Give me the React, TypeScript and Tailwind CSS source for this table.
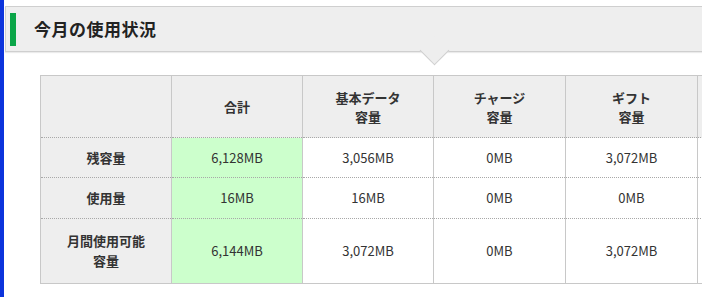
const cols = ['合計', '基本データ\n容量', 'チャージ\n容量', 'ギフト\n容量'];

const rows: { label: string; values: string[]; h: string }[] = [
  { label: '残容量', values: ['6,128MB', '3,056MB', '0MB', '3,072MB'], h: 'h-[40px]' },
  { label: '使用量', values: ['16MB', '16MB', '0MB', '0MB'], h: 'h-[41px]' },
  { label: '月間使用可能\n容量', values: ['6,144MB', '3,072MB', '0MB', '3,072MB'], h: 'h-[65px]' },
];

const dotted = 'border-b [border-bottom-style:dotted] border-b-[#a8a8a8]';
const solid = 'border-b border-b-[#c8c8c8]';

export default function App() {
  return (
    <div
      className="flex h-[297px] w-[702px] overflow-hidden bg-white text-[#333]"
      style={{ fontFamily: '"Noto Sans CJK JP", "Noto Sans", sans-serif' }}
    >
      <div className="w-[4px] shrink-0 bg-[#0c34dc]" />
      <div className="min-w-0 flex-1 pt-[6px]">
        <div className="relative ml-[1px] flex h-[46px] w-[720px] items-center border border-[#cfcfcf] bg-[#eeeeee] shadow-[0_1px_1px_rgba(0,0,0,0.08)]">
          <div className="ml-[4px] h-[33px] w-[6px] bg-[#0aa548]" />
          <h1 className="ml-[18px] text-[17px] font-bold tracking-[0.5px] text-[#222]">今月の使用状況</h1>
          <div className="absolute left-[418px] top-[33px] h-[21px] w-[21px] rotate-45 border-b border-r border-[#cfcfcf] bg-[#eeeeee]" />
        </div>

        <div className="ml-[36px] mt-[23px]">
          <table className="w-[800px] table-fixed border-collapse text-[13px]">
            <colgroup>
              <col className="w-[131px]" />
              <col className="w-[131px]" />
              <col className="w-[131px]" />
              <col className="w-[132px]" />
              <col className="w-[132px]" />
              <col />
            </colgroup>
            <thead>
              <tr className="h-[62px] bg-[#eeeeee]">
                <th className={`border-x border-t border-[#c8c8c8] ${dotted}`} />
                {cols.map((c) => (
                  <th
                    key={c}
                    className={`whitespace-pre-line border-x border-t border-[#c8c8c8] ${dotted} text-center font-bold leading-[19px] text-[#333]`}
                  >
                    {c}
                  </th>
                ))}
                <th className={`border-x border-t border-[#c8c8c8] ${dotted}`} />
              </tr>
            </thead>
            <tbody>
              {rows.map((r, i) => {
                const bottom = i < rows.length - 1 ? dotted : solid;
                return (
                  <tr key={r.label} className={r.h}>
                    <th
                      className={`whitespace-pre-line border-x border-[#c8c8c8] bg-[#eeeeee] text-center font-bold leading-[20px] text-[#333] ${bottom}`}
                    >
                      {r.label}
                    </th>
                    {r.values.map((v, j) => (
                      <td
                        key={j}
                        className={`border-x border-[#c8c8c8] text-center text-[#333] ${
                          j === 0 ? 'bg-[#ccffcc]' : 'bg-white'
                        } ${bottom}`}
                      >
                        {v}
                      </td>
                    ))}
                    <td className={`border-x border-[#c8c8c8] ${bottom}`} />
                  </tr>
                );
              })}
            </tbody>
          </table>
        </div>
      </div>
    </div>
  );
}
